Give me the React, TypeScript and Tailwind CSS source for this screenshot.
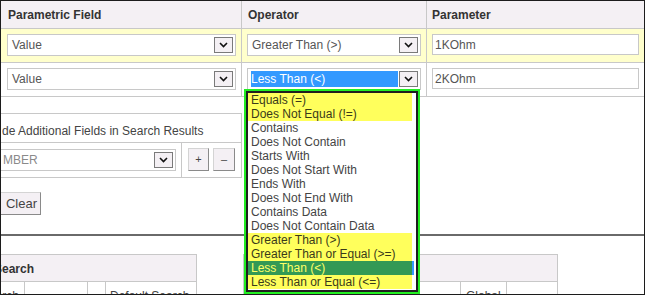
import React from "react";

const font = { fontFamily: '"Liberation Sans", Arial, sans-serif' };

const ops = [
  "Equals (=)",
  "Does Not Equal (!=)",
  "Contains",
  "Does Not Contain",
  "Starts With",
  "Does Not Start With",
  "Ends With",
  "Does Not End With",
  "Contains Data",
  "Does Not Contain Data",
  "Greater Than (>)",
  "Greater Than or Equal (>=)",
  "Less Than (<)",
  "Less Than or Equal (<=)",
];

const marked = [0, 1, 10, 11, 13];
const selected = 12;

const Arrow = () => (
  <span className="flex h-[16px] w-[19px] shrink-0 items-center justify-center border border-[#7a7a7a] bg-[#f4f0f4]">
    <svg width="9" height="6" viewBox="0 0 9 6">
      <path d="M1 1l3.5 3.5L8 1" stroke="#111" strokeWidth="1.6" fill="none" />
    </svg>
  </span>
);

type SelectProps = {
  text: string;
  active?: boolean;
  className?: string;
  muted?: boolean;
};

const Select = ({ text, active, className, muted }: SelectProps) => (
  <div
    className={`flex h-[22px] items-center justify-between border border-[#c8c8c8] bg-white pl-[3px] pr-[2px] ${className}`}
  >
    {active ? (
      <span className="mr-[1px] flex h-[16px] flex-1 items-center bg-[#3399ff] text-white">
        {text}
      </span>
    ) : (
      <span className={`pl-[1px] ${muted ? "text-[#8a8a8a]" : "text-[#555]"}`}>{text}</span>
    )}
    <Arrow />
  </div>
);

const SmallButton = ({ children, className }: { children: React.ReactNode; className?: string }) => (
  <div
    className={`flex items-center justify-center border border-[#d4d4d4] border-b-[#8a8a8a] border-r-[#8a8a8a] bg-[#f4f0f4] text-[#444] ${className}`}
  >
    {children}
  </div>
);

export default function App() {
  return (
    <div
      style={font}
      className="relative h-[295px] w-[645px] overflow-hidden border border-[#1c1c1c] bg-white text-[12px] text-[#444]"
    >
      {/* criteria table */}
      <div className="grid grid-cols-[241px_185px_1fr]">
        <div className="flex h-[28px] items-center border-b border-r border-[#c8c8c8] bg-[#f4f0f4] pl-[7px] font-bold text-[#333]">
          Parametric Field
        </div>
        <div className="flex h-[28px] items-center border-b border-r border-[#c8c8c8] bg-[#f4f0f4] pl-[6px] font-bold text-[#333]">
          Operator
        </div>
        <div className="flex h-[28px] items-center border-b border-[#c8c8c8] bg-[#f4f0f4] pl-[5px] font-bold text-[#333]">
          Parameter
        </div>

        <div className="h-[34px] border-b border-r border-[#c8c8c8] bg-[#ffffcc] pl-[6px] pr-[5px] pt-[5px]">
          <Select text="Value" />
        </div>
        <div className="h-[34px] border-b border-r border-[#c8c8c8] bg-[#ffffcc] pl-[5px] pr-[5px] pt-[5px]">
          <Select text="Greater Than (>)" />
        </div>
        <div className="h-[34px] border-b border-[#c8c8c8] bg-[#ffffcc] pl-[5px] pr-[5px] pt-[5px]">
          <div className="flex h-[21px] items-center border border-[#c8c8c8] bg-white pl-[2px] text-[#555]">1KOhm</div>
        </div>

        <div className="h-[34px] border-b border-r border-[#c8c8c8] pl-[6px] pr-[5px] pt-[5px]">
          <Select text="Value" />
        </div>
        <div className="h-[34px] border-b border-r border-[#c8c8c8] pl-[5px] pr-[5px] pt-[5px]">
          <Select text="Less Than (<)" active />
        </div>
        <div className="h-[34px] border-b border-[#c8c8c8] pl-[5px] pr-[5px] pt-[5px]">
          <div className="flex h-[21px] items-center border border-[#c8c8c8] bg-white pl-[2px] text-[#555]">2KOhm</div>
        </div>
      </div>

      {/* additional fields */}
      <div className="mt-[16px] w-[241px] border-b border-r border-t border-[#c8c8c8]">
        <div className="flex h-[29px] items-center border-b border-[#c8c8c8] pl-[1px] pt-[5px] text-[12px]">
          de Additional Fields in Search Results
        </div>
        <div className="flex h-[34px]">
          <div className="w-[181px] border-r border-[#c8c8c8] pr-[5px] pt-[6px]">
            <div className="-ml-[3px]">
              <Select text="MBER" muted className="pl-[1px]" />
            </div>
          </div>
          <div className="flex gap-[4px] pl-[6px] pt-[5px]">
            <SmallButton className="h-[23px] w-[21px] text-[11px]">+</SmallButton>
            <SmallButton className="h-[23px] w-[22px] text-[11px]">–</SmallButton>
          </div>
        </div>
      </div>

      <SmallButton className="-ml-[2px] mt-[14px] h-[23px] w-[42px] pl-[3px] text-[13px] text-[#222]">Clear</SmallButton>

      <div className="mt-[19px] h-[2px] bg-[#6a6a6a]" />

      {/* results setup */}
      <div className="mt-[18px] flex">
        <div className="w-[196px] border-b border-r border-t border-[#c8c8c8]">
          <div className="flex h-[27px] items-center overflow-hidden border-b border-[#c8c8c8] bg-[#f4f0f4] pt-[1px] font-bold text-[#333]">
            <span className="-ml-[7px]">Search</span>
          </div>
          <div className="flex h-[30px]">
            <div className="w-[24px] overflow-hidden border-r border-[#c8c8c8] pt-[5px]">
              <span className="-ml-[20px] block whitespace-nowrap">Search</span>
            </div>
            <div className="w-[63px] border-r border-[#c8c8c8]" />
            <div className="w-[18px] border-r border-[#c8c8c8]" />
            <div className="flex-1 whitespace-nowrap pl-[4px] pt-[5px]">Default Search</div>
          </div>
        </div>
        <div className="ml-[46px] w-[315px] border border-[#c8c8c8]">
          <div className="h-[27px] border-b border-[#c8c8c8] bg-[#f4f0f4]" />
          <div className="flex h-[30px]">
            <div className="w-[217px] border-r border-[#c8c8c8] pl-[6px] pt-[5px]">Name</div>
            <div className="w-[46px] border-r border-[#c8c8c8] pl-[5px] pt-[5px]">Global</div>
            <div className="flex-1" />
          </div>
        </div>
      </div>

      {/* open operator list */}
      <div className="absolute left-[243px] top-[88px] h-[205px] w-[176px] border-2 border-[#22ee22]">
        <div className="h-full border-2 border-[#1f1f1f] bg-white">
          {ops.map((op, i) => {
            const isSel = i === selected;
            const isMark = marked.includes(i);
            return (
              <div
                key={op}
                className={`mr-[2px] flex h-[14px] items-center whitespace-nowrap pl-[3px] leading-[14px] ${
                  isSel
                    ? "border-r-2 border-[#3399ff] bg-[#339955] text-[#ffff66]"
                    : isMark
                      ? "mr-[4px] bg-[#ffff5c] text-[#3a3a1a]"
                      : "text-[#444]"
                }`}
              >
                {op}
              </div>
            );
          })}
        </div>
      </div>
    </div>
  );
}
